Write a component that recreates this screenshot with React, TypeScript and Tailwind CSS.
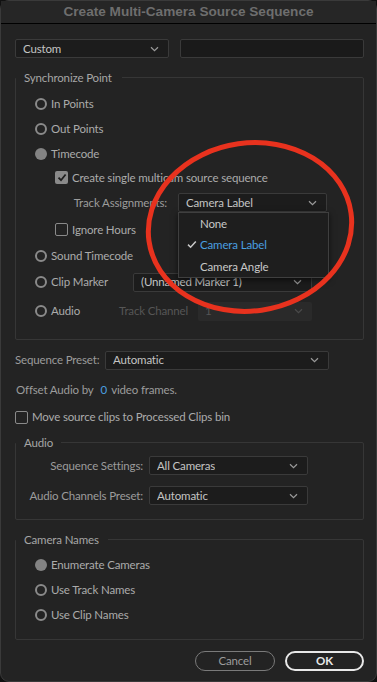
import React from "react";

const font = "font-['Lato','Open_Sans',sans-serif]";

const Chevron = ({ dim }: { dim?: boolean }) => (
  <svg width="9" height="6" viewBox="0 0 9 6" className="shrink-0">
    <path
      d="M1 1.2 L4.5 4.6 L8 1.2"
      fill="none"
      stroke={dim ? "#4a4a4a" : "#9a9a9a"}
      strokeWidth="1.2"
    />
  </svg>
);

const Select = ({
  value,
  className,
  disabled,
}: {
  value: string;
  className: string;
  disabled?: boolean;
}) => (
  <div
    className={
      "flex items-center justify-between rounded-[2px] pl-[7px] pr-[9px] " +
      (disabled
        ? "bg-[#2a2a2a] text-[#555]"
        : "border border-[#3a3a3a] bg-[#1c1c1c] text-[#c4c4c4]") +
      " " +
      className
    }
  >
    <span className="truncate">{value}</span>
    <Chevron dim={disabled} />
  </div>
);

const Radio = ({ label, on }: { label: string; on?: boolean }) => (
  <div className="flex items-center gap-[4px]">
    <span
      className={
        "block h-[12px] w-[12px] shrink-0 rounded-full " +
        (on ? "bg-[#838383]" : "border-2 border-[#8a8a8a]")
      }
    />
    <span>{label}</span>
  </div>
);

const Check = ({ label, on }: { label: string; on?: boolean }) => (
  <div className="flex items-center gap-[4px]">
    <span
      className={
        "flex h-[13px] w-[13px] shrink-0 items-center justify-center rounded-[2px] " +
        (on ? "bg-[#8a8a8a]" : "border-[1.5px] border-[#8a8a8a]")
      }
    >
      {on && (
        <svg width="10" height="9" viewBox="0 0 10 9">
          <path d="M1.5 4.6 L4 7.2 L8.6 1.5" fill="none" stroke="#1e1e1e" strokeWidth="1.8" />
        </svg>
      )}
    </span>
    <span>{label}</span>
  </div>
);

const Group = ({
  title,
  pr,
  children,
  className,
}: {
  title: string;
  pr: string;
  children: React.ReactNode;
  className: string;
}) => (
  <fieldset className={"border border-[#363636] rounded-[2px] " + className}>
    <legend className={"pl-[8px] text-[#a6a6a6] leading-[15px] " + pr}>{title}</legend>
    {children}
  </fieldset>
);

export default function App() {
  return (
    <div className={"relative h-[682px] w-[377px] overflow-hidden bg-[#111] text-[11.5px] tracking-[-0.15px] text-[#ababab] " + font}>
      <div className="flex h-full flex-col rounded-[9px] border border-[#3a3a3a] bg-[#232323]">
        <div className="flex h-[23px] shrink-0 items-center justify-center border-b border-black bg-[#262626] font-['Liberation_Sans',sans-serif] text-[13.6px] font-bold tracking-normal text-[#6e6e6e]">
          Create Multi-Camera Source Sequence
        </div>

        <div className="flex flex-col pl-[14px] pr-[12px] pt-[15px]">
          <div className="flex h-[19px] gap-[11px]">
            <Select value="Custom" className="w-[154px]" />
            <div className="flex-1 rounded-[2px] border border-[#3a3a3a] bg-[#1a1a1a]" />
          </div>

          <Group title="Synchronize Point" pr="pr-[10px]" className="mt-[12px] pb-[13px]">
            <div className="flex flex-col pl-[19px] pt-[6px]">
              <div className="flex h-[25px] items-center"><Radio label="In Points" /></div>
              <div className="flex h-[25px] items-center"><Radio label="Out Points" /></div>
              <div className="flex h-[25px] items-center"><Radio label="Timecode" on /></div>
              <div className="flex h-[23px] items-center pl-[20px]">
                <Check label="Create single multicam source sequence" on />
              </div>
              <div className="relative flex h-[27px] items-center">
                <span className="w-[132px] text-right text-[#9c9c9c]">Track Assignments:</span>
                <Select value="Camera Label" className="ml-[11px] h-[19px] w-[149px]" />
                <div className="absolute left-[143px] top-[23px] z-10 flex h-[66px] w-[151px] flex-col border border-[#3f3f3f] bg-[#1e1e1e] shadow-[0_2px_6px_rgba(0,0,0,0.6)]">
                  <div className="flex h-[22px] items-center pl-[21px] text-[#c8c8c8]">None</div>
                  <div className="flex h-[22px] items-center pl-[8px] text-[#4a9fe0]">
                    <svg width="10" height="9" viewBox="0 0 10 9" className="mr-[3px]">
                      <path d="M1 4.6 L3.6 7.2 L8.8 1.4" fill="none" stroke="#c8c8c8" strokeWidth="1.5" />
                    </svg>
                    Camera Label
                  </div>
                  <div className="flex h-[22px] items-center pl-[21px] text-[#c8c8c8]">Camera Angle</div>
                </div>
              </div>
              <div className="flex h-[27px] items-center pl-[20px]"><Check label="Ignore Hours" /></div>
              <div className="flex h-[25px] items-center"><Radio label="Sound Timecode" /></div>
              <div className="flex h-[28px] items-center">
                <div className="w-[98px]"><Radio label="Clip Marker" /></div>
                <Select value="(Unnamed Marker 1)" className="h-[19px] w-[179px]" />
              </div>
              <div className="flex h-[30px] items-center">
                <div className="w-[84px]"><Radio label="Audio" /></div>
                <span className="w-[79px] text-[#565656]">Track Channel</span>
                <Select value="1" disabled className="h-[19px] w-[114px]" />
              </div>
            </div>
          </Group>

          <div className="mt-[10px] flex h-[20px] items-center">
            <span className="w-[90px] text-[#9c9c9c]">Sequence Preset:</span>
            <Select value="Automatic" className="h-[19px] w-[224px]" />
          </div>

          <div className="mt-[10px] flex h-[20px] items-center pl-[1px]">
            <span className="text-[#9c9c9c]">Offset Audio by</span>
            <span className="ml-[7px] text-[#4a9fe0]">0</span>
            <span className="ml-[4px] text-[#9c9c9c]">video frames.</span>
          </div>

          <div className="mt-[7px] flex h-[20px] items-center">
            <Check label="Move source clips to Processed Clips bin" />
          </div>

          <Group title="Audio" pr="pr-[8px]" className="mt-[8px] pb-[14px]">
            <div className="flex flex-col gap-[11px] pt-[6px]">
              <div className="flex items-center">
                <span className="w-[127px] text-right text-[#9c9c9c]">Sequence Settings:</span>
                <Select value="All Cameras" className="ml-[6px] h-[19px] w-[159px]" />
              </div>
              <div className="flex items-center">
                <span className="w-[127px] text-right text-[#9c9c9c]">Audio Channels Preset:</span>
                <Select value="Automatic" className="ml-[6px] h-[19px] w-[159px]" />
              </div>
            </div>
          </Group>

          <Group title="Camera Names" pr="pr-[9px]" className="mt-[12px] pb-[12px]">
            <div className="flex flex-col pl-[19px] pt-[5px]">
              <div className="flex h-[25px] items-center"><Radio label="Enumerate Cameras" on /></div>
              <div className="flex h-[25px] items-center"><Radio label="Use Track Names" /></div>
              <div className="flex h-[25px] items-center"><Radio label="Use Clip Names" /></div>
            </div>
          </Group>

          <div className="mt-[11px] flex justify-end gap-[10px]">
            <button className="flex h-[20px] w-[80px] items-center justify-center rounded-full border-[1.5px] border-[#7a7a7a] text-[#9c9c9c]">
              Cancel
            </button>
            <button className="flex h-[20px] w-[79px] items-center justify-center rounded-full border-2 border-[#e8e8e8] font-bold text-[#e8e8e8]">
              OK
            </button>
          </div>
        </div>
      </div>

      <svg className="pointer-events-none absolute left-0 top-0 z-20" width="377" height="682">
        <ellipse
          cx="250"
          cy="227"
          rx="102"
          ry="84"
          transform="rotate(-8 250 227)"
          fill="none"
          stroke="#e8321e"
          strokeWidth="5"
        />
      </svg>
    </div>
  );
}
